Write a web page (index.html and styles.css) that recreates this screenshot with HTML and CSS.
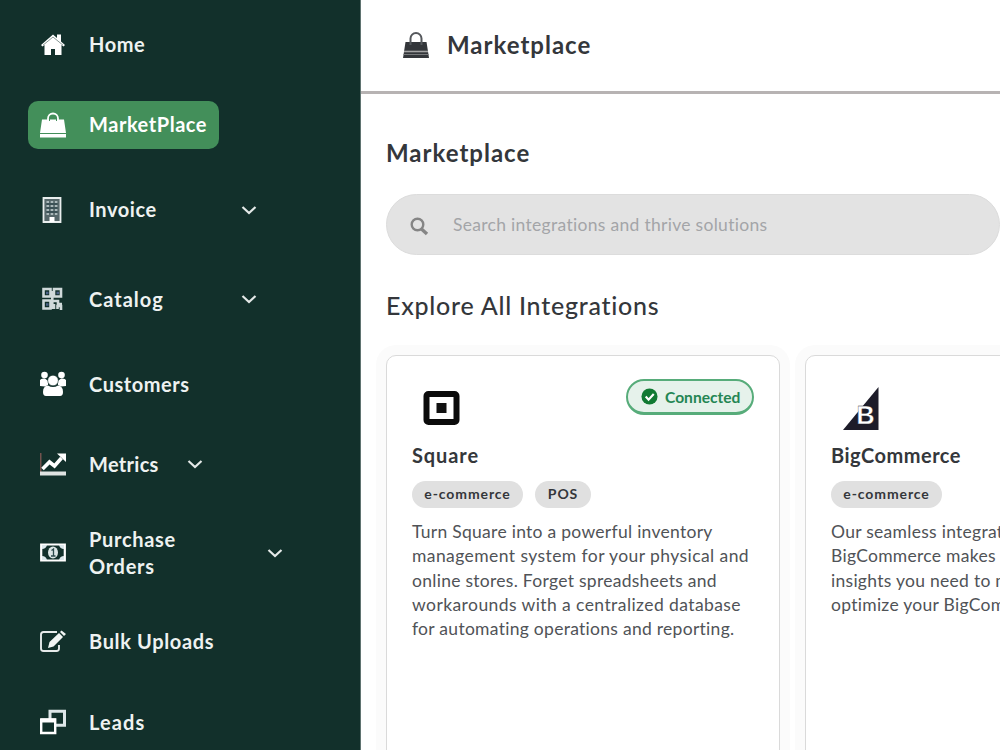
FILE: index.html
```html
<!DOCTYPE html>
<html lang="en">
<head>
    <meta charset="UTF-8">
    <meta name="viewport" content="width=device-width, initial-scale=1.0">
    <title>Marketplace</title>
    <link rel="stylesheet" href="styles.css">
</head>
<body>

<nav class="sidebar">
    <a class="nav-item">
        <svg class="nav-icon" viewBox="0 0 26 26" fill="#fff"><path d="M13 2.500 1 13l1.500 1.500L4.500 13v10H11v-6h4v6h6.500V13l2 1.500L25 13l-4-3.500V2.500h-4v3.500z"/><path d="M3 13.200 13 5l10 8.200" fill="none" stroke="#12302b" stroke-width=".5"/></svg>
        <span class="nav-label">Home</span>
    </a>
    <a class="nav-item active">
        <svg class="nav-icon" viewBox="0 0 26 26" fill="#fff"><path d="M2 7.500h22l2 13.500H0zM0 22h26v3.500H0z"/><path d="M8 10V6.500a5 5 0 0 1 10 0V10" fill="none" stroke="#fff" stroke-width="1.800"/><path d="M9.500 9V7a3.500 3 0 0 1 7 0v2" fill="none" stroke="#438f5a" stroke-width="1"/></svg>
        <span class="nav-label">MarketPlace</span>
    </a>
    <a class="nav-item tall">
        <svg class="nav-icon" viewBox="0 0 26 26"><path d="M3.500 1h17v24h-17z" fill="#56676a" stroke="#e9eeee" stroke-width="1.800"/><path d="M6.500 5h11M6.500 9h11M6.500 13h11M6.500 17h11" stroke="#aab8ba" stroke-width="2" stroke-dasharray="2.500 1.700"/><path d="M6.500 7h11M6.500 11h11M6.500 15h11" stroke="#203c42" stroke-width="1"/><path d="M9.500 20h5v5h-5z" fill="#fff"/></svg>
        <span class="nav-label wide">Invoice</span>
        <svg class="chevron" viewBox="0 0 16 10"><path d="m1.500 2 6.500 6 6.500-6"/></svg>
    </a>
    <a class="nav-item tall">
        <svg class="nav-icon" viewBox="0 0 26 26" fill="none" stroke="#cfd9da" stroke-width="2.600"><path d="M3.500 3h7v7.500h-7zM14 3h7v7.500h-7zM3.500 14.500h7v8h-7z"/><path d="M6 7h2.500M16.500 7H19M6 18.500h2.500" stroke="#4b6188"/><path d="M13 15h5v3h4M14 18v5M17.500 23v-3H21v4M12.300 5v18"/></svg>
        <span class="nav-label wide catalog">Catalog</span>
        <svg class="chevron" viewBox="0 0 16 10"><path d="m1.500 2 6.500 6 6.500-6"/></svg>
    </a>
    <a class="nav-item">
        <svg class="nav-icon" viewBox="0 0 26 26" fill="#fff"><circle cx="4.500" cy="4" r="3.300"/><circle cx="21.500" cy="4" r="3.300"/><path d="M0 15V9q1-2 5-1.500l3 2.500v4l-3 1.500zM26 15V9q-1-2-5-1.500l-3 2.500v4l3 1.500z"/><circle cx="13" cy="9.500" r="5.300" stroke="#12302b" stroke-width=".6"/><path d="M3 21q0-6 5-6.500 5 3 10 0 5 .5 5 6.500 0 4-3 4H6q-3 0-3-4z"/></svg>
        <span class="nav-label">Customers</span>
    </a>
    <a class="nav-item">
        <svg class="nav-icon" viewBox="0 0 26 26"><path d="M.8 2v21" stroke="#8b5d58" stroke-width="1.200"/><path d="M0 22.500h26" stroke="#dfe3e2" stroke-width="4"/><path d="m2.500 18 7-7 5 4 7-8" fill="none" stroke="#fff" stroke-width="3.600"/><path d="M17 2.500h9V11z" fill="#fff"/></svg>
        <span class="nav-label mid">Metrics</span>
        <svg class="chevron" viewBox="0 0 16 10"><path d="m1.500 2 6.500 6 6.500-6"/></svg>
    </a>
    <a class="nav-item double">
        <svg class="nav-icon" viewBox="0 0 26 26"><path d="M1.200 4.500h23.600v16H1.200z" fill="#12302b" stroke="#fff" stroke-width="2.200"/><path d="M2 5h5Q6 9 2 9zM24 5h-5q1 4 5 4zM2 20h5q-1-4-5-4zM24 20h-5q1-4 5-4z" fill="#dce8ec"/><ellipse cx="13" cy="12.500" rx="5" ry="6" fill="#dce6e6"/><path d="M11.500 10.500 13.500 9v7M11 16h4.500" fill="none" stroke="#2b4a4c" stroke-width="1.300"/></svg>
        <span class="nav-label widest">Purchase<br>Orders</span>
        <svg class="chevron" viewBox="0 0 16 10"><path d="m1.500 2 6.500 6 6.500-6"/></svg>
    </a>
    <a class="nav-item">
        <svg class="nav-icon" viewBox="0 0 26 26"><path d="M17 3H3.500Q1 3 1 5.500v14Q1 22 3.500 22h13q2.500 0 2.500-2.500V16" fill="none" stroke="#e6eaea" stroke-width="1.900"/><path d="m8 19 1.500-6L19 4l4 4-9.500 9.500zM20 3l1.500-1.500L26 5l-2 2z" fill="#f2f5f4"/></svg>
        <span class="nav-label bulk">Bulk Uploads</span>
    </a>
    <a class="nav-item">
        <svg class="nav-icon" viewBox="0 0 26 26" fill="none"><path d="M10 2.200h14.500v14H10z" stroke="#dde6e8" stroke-width="3"/><path d="M1.200 10.500h14v13.500h-14z" fill="#12302b" stroke="#fff" stroke-width="2.400"/><path d="M1 11.500h15" stroke="#fff" stroke-width="4"/></svg>
        <span class="nav-label leads">Leads</span>
    </a>
</nav>

<main class="main">
    <header class="topbar">
        <svg class="topbar-icon" viewBox="0 0 26 26" fill="#33363a"><path d="M2.500 10h21L26 26H0z"/><path d="M7.500 13V6.500a5.500 5.500 0 0 1 11 0V13" fill="none" stroke="#55585c" stroke-width="2"/><path d="M1 19.500h24" stroke="#a4a4a4" stroke-width="1.600"/><path d="M.5 22.500h25" stroke="#77797b" stroke-width="1"/></svg>
        <h1 class="topbar-title">Marketplace</h1>
    </header>

    <section class="content">
        <h2 class="page-title">Marketplace</h2>
        <div class="search">
            <svg class="search-icon" viewBox="0 0 20 20" fill="none" stroke="#858585"><circle cx="8.500" cy="8.500" r="5.800" stroke-width="2.400"/><path d="m12.500 13 5.500 5" stroke-width="3.400"/></svg>
            <span class="search-text">Search integrations and thrive solutions</span>
        </div>
        <h3 class="section-title">Explore All Integrations</h3>

        <div class="cards">
            <article class="card">
                <div class="card-top">
                    <svg class="logo" viewBox="0 0 60 52"><rect x="14.500" y="15" width="30" height="28" rx="2" fill="#fff" stroke="#0b0b0b" stroke-width="6"/><rect x="24.500" y="24" width="10" height="10" fill="#111"/></svg>
                    <span class="status">
                        <svg class="status-icon" viewBox="0 0 18 18"><circle cx="9" cy="9" r="8.500" fill="#117a33"/><path d="m5 9 3 3.300 5.500-6" fill="none" stroke="#fff" stroke-width="2.300"/></svg>
                        Connected
                    </span>
                </div>
                <h4 class="card-title square">Square</h4>
                <div class="tags"><span class="tag">e-commerce</span><span class="tag pos">POS</span></div>
                <p class="desc">Turn Square into a powerful inventory<br><span class="desc-wide">management system for your physical and</span><br>online stores. Forget spreadsheets and<br><span class="desc-wide">workarounds with a centralized database</span><br>for automating operations and reporting.</p>
            </article>
            <article class="card">
                <div class="card-top">
                    <svg class="logo" viewBox="0 0 60 52"><path d="M47.500 8v43H12z" fill="#1d1c29"/><text class="logo-letter" x="25.500" y="44.500">B</text></svg>
                </div>
                <h4 class="card-title">BigCommerce</h4>
                <div class="tags"><span class="tag">e-commerce</span></div>
                <p class="desc">Our seamless integration with<br>BigCommerce makes it easy to get<br>insights you need to manage and<br>optimize your BigCommerce store.</p>
            </article>
        </div>
    </section>
</main>

</body>
</html>
```
FILE: styles.css
```css
* {
    box-sizing: border-box;
}
body {
    margin: 0;
    display: flex;
    width: 1000px;
    height: 750px;
    overflow: hidden;
    background: #fff;
    color: #34373b;
    font-family: Lato, "Open Sans", sans-serif;
}
h1, h2, h3, h4, p {
    margin: 0;
}
svg {
    display: block;
    flex-shrink: 0;
}
.sidebar {
    width: 361px;
    flex-shrink: 0;
    padding: 20.5px 28px 0;
    display: flex;
    flex-direction: column;
    align-items: flex-start;
    gap: 31.6px;
    background: #12302b;
    border-right: 1px solid #5f7370;
}
.nav-item {
    display: flex;
    align-items: center;
    flex-shrink: 0;
    height: 48.5px;
    padding: 0 12px;
    border-radius: 10px;
    color: #eef2f1;
}
.nav-item.tall {
    height: 58px;
}
.nav-item.double {
    height: 66px;
}
.nav-item.active {
    background: #438f5a;
    color: #fff;
}
.nav-icon {
    width: 26px;
    height: 26px;
    margin-right: 23px;
}
.nav-label {
    font-size: 20px;
    font-weight: 700;
    line-height: 27px;
    letter-spacing: 0.55px;
    white-space: nowrap;
}
.nav-label.wide {
    width: 152px;
}
.nav-label.catalog {
    letter-spacing: 1px;
}
.nav-label.mid {
    width: 98px;
    letter-spacing: 0.3px;
}
.nav-label.widest {
    width: 178px;
    letter-spacing: 0.7px;
}
.nav-label.bulk {
    letter-spacing: 0.65px;
}
.nav-label.leads {
    letter-spacing: 1.1px;
}
.chevron {
    width: 16px;
    height: 10px;
    fill: none;
    stroke: #e4e9e8;
    stroke-width: 2.2;
}
.main {
    flex: 1;
    min-width: 0;
    overflow: hidden;
}
.topbar {
    display: flex;
    align-items: center;
    gap: 18px;
    height: 94px;
    padding: 0 42px 2px;
    border-bottom: 3px solid #b7b3b3;
}
.topbar-icon {
    width: 26px;
    height: 26px;
}
.topbar-title, .page-title {
    font-size: 24px;
    font-weight: 700;
    line-height: 30px;
    letter-spacing: 1px;
}
.content {
    padding: 44px 0 0 25px;
}
.search {
    display: flex;
    align-items: center;
    width: 614px;
    height: 61px;
    margin-top: 26px;
    padding-left: 22px;
    border: 1px solid #dcdcdc;
    border-radius: 31px;
    background: #e3e3e3;
}
.search-icon {
    width: 20px;
    height: 20px;
    margin: 3px 24px 0 0;
}
.search-text {
    font-size: 17.5px;
    letter-spacing: 0.3px;
    color: #a3a5a8;
    white-space: nowrap;
}
.section-title {
    margin-top: 35px;
    font-size: 25px;
    font-weight: 500;
    line-height: 30px;
    letter-spacing: 0.75px;
    white-space: nowrap;
}
.cards {
    display: flex;
    gap: 25px;
    margin-top: 35px;
}
.card {
    width: 394px;
    height: 460px;
    flex-shrink: 0;
    padding: 23px 25px;
    border: 1px solid #dadada;
    border-radius: 10px;
    background: #fff;
    box-shadow: 0 0 0 10px #fbfbfb;
}
.card-top {
    display: flex;
    justify-content: space-between;
    align-items: flex-start;
    height: 60px;
}
.logo {
    width: 60px;
    height: 52px;
}
.logo-letter {
    font-family: "Liberation Sans", sans-serif;
    font-size: 25px;
    font-weight: 700;
    fill: #fff;
    stroke: #1d1c29;
    stroke-width: 0.3px;
}
.status {
    display: flex;
    align-items: center;
    gap: 7px;
    height: 36px;
    width: 128px;
    padding-left: 13px;
    border: 2px solid #57ac7a;
    border-bottom-width: 3px;
    border-radius: 18px;
    background: #e6f2eb;
    color: #248653;
    font-size: 15.6px;
    font-weight: 700;
}
.status-icon {
    width: 17px;
    height: 17px;
}
.card-title {
    margin-top: 3px;
    font-size: 20px;
    font-weight: 700;
    line-height: 26px;
    letter-spacing: 0.5px;
}
.card-title.square {
    letter-spacing: 0.9px;
}
.tags {
    display: flex;
    gap: 12px;
    margin-top: 13px;
}
.tag {
    width: 111px;
    height: 27px;
    border-radius: 14px;
    background: #e0e0e0;
    font-size: 14px;
    font-weight: 700;
    line-height: 26px;
    letter-spacing: 0.9px;
    text-align: center;
}
.tag.pos {
    width: 56px;
}
.desc {
    margin-top: 12px;
    font-size: 17.5px;
    line-height: 24.3px;
    letter-spacing: 0.28px;
    color: #505357;
    white-space: nowrap;
}
.desc-wide {
    letter-spacing: 0.42px;
}
```
